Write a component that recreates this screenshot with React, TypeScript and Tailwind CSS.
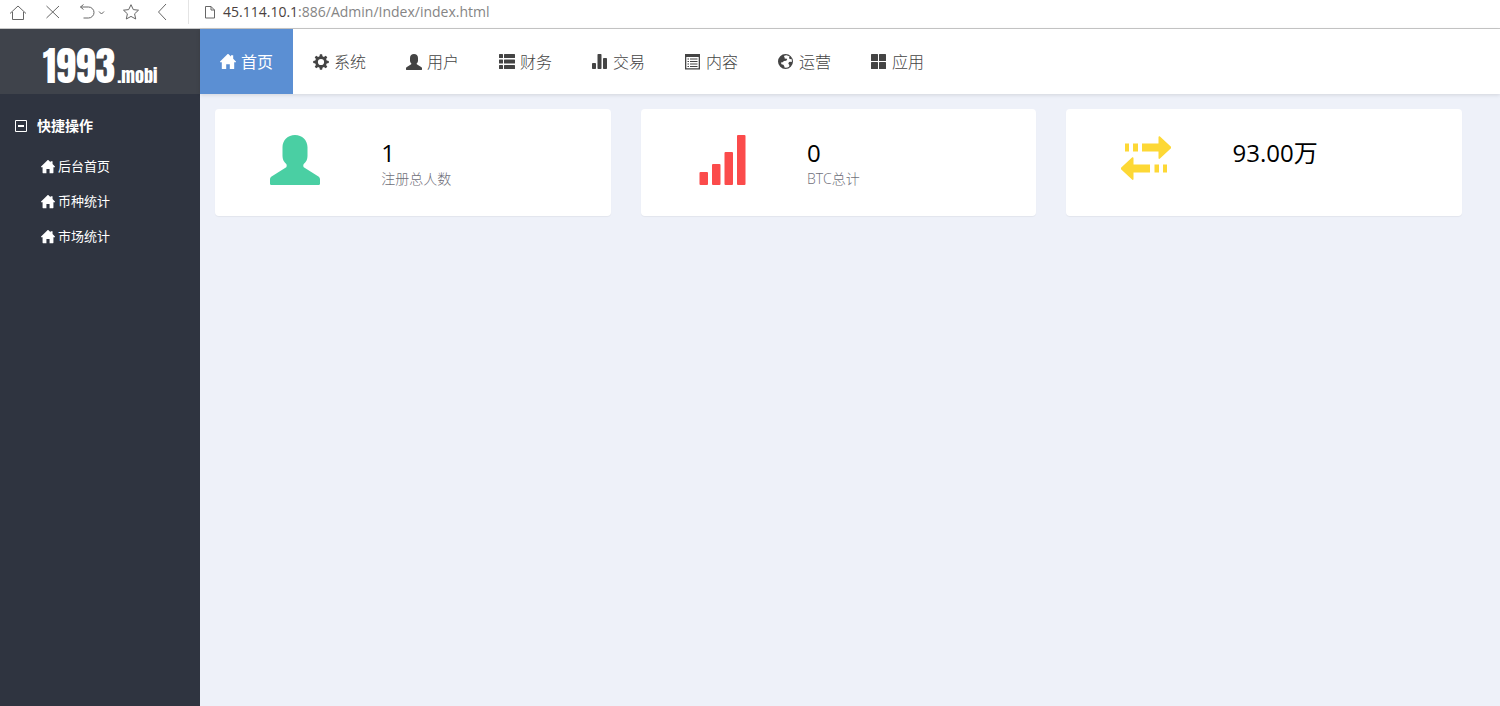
import { useState, type ReactNode } from 'react'

interface IconProps {
  className?: string
}

interface NavItem {
  label: string
  icon: (props: IconProps) => ReactNode
}

function Glyph({ className = 'size-4', children }: IconProps & { children: ReactNode }) {
  return (
    <svg className={`${className} shrink-0`} viewBox="0 0 16 16" fill="currentColor" aria-hidden="true">
      {children}
    </svg>
  )
}

function HomeIcon({ className }: IconProps) {
  return (
    <Glyph className={className}>
      <path d="M7.4.2a.8.8 0 0 1 1.200 0L11 2.500V1.300h2.200v3.400l2.700 2.700c.4.400.1.900-.3.900H14.200v6.200a.5.5 0 0 1-.5.500h-3.900v-4.800H6.200v4.800H2.300a.5.5 0 0 1-.5-.5V8.300H.4c-.4 0-.7-.5-.3-.9z" />
    </Glyph>
  )
}

function CogIcon({ className }: IconProps) {
  return (
    <Glyph className={className}>
      <path
        fillRule="evenodd"
        d="M6.900.2h2.200l.4 2.100 1.400.6 1.800-1.200 1.600 1.600-1.200 1.800.6 1.400 2.100.4v2.200l-2.100.4-.6 1.400 1.200 1.800-1.600 1.600-1.800-1.200-1.400.6-.4 2.100H6.900l-.4-2.100-1.400-.6-1.800 1.200-1.600-1.600 1.200-1.800-.6-1.400L.2 9.100V6.900l2.100-.4.6-1.400-1.200-1.800 1.600-1.600 1.800 1.200 1.400-.6zM8 4.900a3.100 3.100 0 1 0 0 6.200 3.100 3.100 0 0 0 0-6.200z"
      />
    </Glyph>
  )
}

function UserIcon({ className }: IconProps) {
  return (
    <Glyph className={className}>
      <path d="M8 0c2.300 0 4 1.700 4 3.900v2.800c0 1-.4 1.900-1.200 2.600-.2.2-.2.8 0 1l4.700 3c.3.2.5.5.5.9v1.400c0 .2-.2.400-.4.400H.4c-.2 0-.4-.2-.4-.4v-1.400c0-.4.2-.7.5-.9l4.700-3c.2-.2.2-.8 0-1C4.400 8.600 4 7.700 4 6.700V3.900C4 1.700 5.700 0 8 0z" />
    </Glyph>
  )
}

function ListIcon({ className }: IconProps) {
  return (
    <Glyph className={className}>
      <rect x="0" y="0" width="4" height="4" rx=".5" />
      <rect x="5" y="0" width="11" height="4" rx=".5" />
      <rect x="0" y="5.500" width="4" height="4" rx=".5" />
      <rect x="5" y="5.500" width="11" height="4" rx=".5" />
      <rect x="0" y="11" width="4" height="4" rx=".5" />
      <rect x="5" y="11" width="11" height="4" rx=".5" />
    </Glyph>
  )
}

function StatsIcon({ className }: IconProps) {
  return (
    <Glyph className={className}>
      <rect x="0" y="9" width="4" height="6" rx=".8" />
      <rect x="5.500" y="0" width="4" height="15" rx=".8" />
      <rect x="11" y="4" width="4" height="11" rx=".8" />
    </Glyph>
  )
}

function ArticleIcon({ className }: IconProps) {
  return (
    <Glyph className={className}>
      <path fillRule="evenodd" d="M0 0h15v15.500H0zM1.300 3v11.200h12.400V3z" />
      <path d="M2.500 4.500H4v1H2.500zM5 4.500h7.500v1H5zM2.500 7H4v1H2.500zM5 7h7.500v1H5zM2.500 9.500H4v1H2.500zM5 9.500h7.500v1H5zM2.500 12H4v1H2.500zM5 12h7.500v1H5z" />
    </Glyph>
  )
}

function GlobeIcon({ className }: IconProps) {
  return (
    <Glyph className={className}>
      <path
        fillRule="evenodd"
        d="M7.500 0a7.500 7.500 0 1 1 0 15 7.500 7.500 0 0 1 0-15zM8.200 1.300l-1.900.5-.3 1.400.9.300-.2 1.300 1.600-.4.9 1.100-1 1.300-2.200.2-1.300 1.200-1.800.2.6 1.800 1.900.6.9 1.500.2 1.300a6.200 6.200 0 0 0 4.600-.8l.3-1.700-1.100-1.300.7-1.700 1.500-.3 1.300.3a6.200 6.200 0 0 0-.4-3.300l-1.400.4-1-1.200.6-1.400A6.200 6.200 0 0 0 8.200 1.300z"
      />
    </Glyph>
  )
}

function GridIcon({ className }: IconProps) {
  return (
    <Glyph className={className}>
      <rect x="0" y="0" width="7" height="7" rx=".5" />
      <rect x="8" y="0" width="7" height="7" rx=".5" />
      <rect x="0" y="8" width="7" height="7" rx=".5" />
      <rect x="8" y="8" width="7" height="7" rx=".5" />
    </Glyph>
  )
}

function SignalIcon() {
  return (
    <svg className="size-[50px]" viewBox="0 0 50 50" fill="currentColor" aria-hidden="true">
      <rect x="3.500" y="37" width="8.500" height="13" rx="1" />
      <rect x="16" y="29" width="8.500" height="21" rx="1" />
      <rect x="28.500" y="17" width="8.500" height="33" rx="1" />
      <rect x="41" y="0" width="8.500" height="50" rx="1" />
    </svg>
  )
}

function TransferIcon() {
  return (
    <svg className="size-[50px]" viewBox="0 0 50 50" fill="currentColor" aria-hidden="true">
      <path d="M4 8.500h4v8H4zM12 8.500h5v8h-5zM21 8.500h16.500V2.200c0-1 .8-1.300 1.500-.6l11 10.100c.5.500.5 1 0 1.500L39 23.500c-.7.7-1.500.4-1.500-.6v-6.400H21z" />
      <path d="M46 29.500h-4v8h4zM38 29.500h-4.500v8H38zM29 29.500H12.500v-6.300c0-1-.8-1.300-1.500-.6L0 32.700c-.5.500-.5 1 0 1.500l11 10.300c.7.700 1.500.4 1.500-.6v-6.400H29z" />
    </svg>
  )
}

const navItems: NavItem[] = [
  { label: '首页', icon: HomeIcon },
  { label: '系统', icon: CogIcon },
  { label: '用户', icon: UserIcon },
  { label: '财务', icon: ListIcon },
  { label: '交易', icon: StatsIcon },
  { label: '内容', icon: ArticleIcon },
  { label: '运营', icon: GlobeIcon },
  { label: '应用', icon: GridIcon },
]

const quickLinks = ['后台首页', '币种统计', '市场统计']

function BrowserBar() {
  return (
    <div className="flex h-[29px] items-start border-b border-[#c8c8c8] bg-white text-[#666]">
      <div className="flex h-6 shrink-0 items-center pl-2">
        <button type="button" aria-label="主页" className="mr-4">
          <svg className="size-5" viewBox="0 0 20 20" fill="none" stroke="currentColor">
            <path d="M2 11.500 10 4l8 7.500M4.500 10v7.500h11V10" />
          </svg>
        </button>
        <button type="button" aria-label="停止" className="mr-4">
          <svg className="size-5" viewBox="0 0 20 20" fill="none" stroke="currentColor">
            <path d="m2.500 4 12.500 12M15 4 2.500 16" />
          </svg>
        </button>
        <button type="button" aria-label="撤销" className="mr-4">
          <svg className="h-5 w-[26px]" viewBox="0 0 26 20" fill="none" stroke="currentColor">
            <path d="M3.500 2.500.5 5l3 2.500M.5 5h8a5.500 5.500 0 0 1 0 11H3.500M19 9.500l2.500 2.500L24 9.500" />
          </svg>
        </button>
        <button type="button" aria-label="收藏" className="mr-4">
          <svg className="size-5" viewBox="0 0 20 20" fill="none" stroke="currentColor">
            <path d="m9 2.700 2.300 4.900 5.200.6-3.900 3.600 1.100 5.200L9 14.400 4.300 17l1.100-5.200-3.900-3.600 5.200-.6z" />
          </svg>
        </button>
        <button type="button" aria-label="后退">
          <svg className="h-5 w-3" viewBox="0 0 12 20" fill="none" stroke="currentColor">
            <path d="M8 2 .5 10 8 18" />
          </svg>
        </button>
      </div>
      <div className="ml-[18px] flex h-6 flex-1 items-center border-l border-[#e4e4e4] pl-4">
        <svg className="mr-2 h-[14px] w-[10px] shrink-0" viewBox="0 0 10 14" fill="none" stroke="currentColor">
          <path d="M.5 1.500H6l3.500 3.500v8H.5zM6 1.500V5h3.500" />
        </svg>
        <label htmlFor="address" className="text-sm text-[#4a3f40]">
          45.114.10.1
        </label>
        <input
          id="address"
          type="text"
          defaultValue=":886/Admin/Index/index.html"
          className="min-w-0 flex-1 bg-transparent text-sm text-[#858585] outline-none"
        />
      </div>
    </div>
  )
}

function Sidebar() {
  const [open, setOpen] = useState(true)

  return (
    <aside className="w-[200px] shrink-0 bg-[#2f3440] text-white">
      <a
        href="#"
        className="flex h-[65px] items-baseline justify-center gap-0.5 bg-[#3f434b] font-['Impact','Anton','Roboto_Condensed','Liberation_Sans_Narrow',sans-serif]"
      >
        <span className="text-[40px] leading-[75px]">1993</span>
        <span className="text-lg">.mobi</span>
      </a>
      <button
        type="button"
        aria-expanded={open}
        onClick={() => setOpen(!open)}
        className="mt-[22px] flex items-center gap-2.5 pl-[15px] text-sm font-bold"
      >
        <svg className="size-3 shrink-0" viewBox="0 0 12 12" fill="none" stroke="currentColor" aria-hidden="true">
          <path d="M.5.5h11v11H.5z" />
          <path d={open ? 'M3 6h6' : 'M3 6h6M6 3v6'} strokeWidth="2" />
        </svg>
        快捷操作
      </button>
      {open && (
        <ul className="mt-[13px]">
          {quickLinks.map((label) => (
            <li key={label}>
              <a href="#" className="flex h-[35px] items-center gap-[3px] pl-[41px] text-[13px]">
                <HomeIcon className="size-[14px]" />
                {label}
              </a>
            </li>
          ))}
        </ul>
      )}
    </aside>
  )
}

function TopNav() {
  return (
    <nav className="flex h-[65px] bg-white shadow-[0_1px_4px_rgba(0,0,0,0.12)]">
      {navItems.map(({ label, icon: Icon }, i) => (
        <a
          key={label}
          href="#"
          className={`flex items-center gap-[5px] px-5 text-base ${
            i === 0 ? 'bg-[#5b8fd3] text-white' : 'font-light text-[#444]'
          }`}
        >
          <Icon />
          {label}
        </a>
      ))}
    </nav>
  )
}

interface StatCardProps {
  value: string
  label?: string
  icon: ReactNode
}

function StatCard({ value, label, icon }: StatCardProps) {
  return (
    <div className="flex h-[107px] rounded bg-white pt-[26px] shadow-[0_1px_1px_rgba(0,0,0,0.05)]">
      <div className="flex w-2/5 justify-center pl-0.5">{icon}</div>
      <div className="pt-0.5 pl-2">
        <div className="text-2xl text-black">{value}</div>
        {label && <div className="text-sm font-light text-[#6f6f7a]">{label}</div>}
      </div>
    </div>
  )
}

export default function App() {
  return (
    <div className="flex min-h-screen flex-col bg-[#eef1f9] font-['Open_Sans','Noto_Sans_CJK_SC',sans-serif]">
      <BrowserBar />
      <div className="flex flex-1">
        <Sidebar />
        <div className="min-w-0 flex-1">
          <TopNav />
          <main className="grid grid-cols-3 gap-[30px] pt-[15px] pr-[38px] pl-[15px]">
            <StatCard
              value="1"
              label="注册总人数"
              icon={
                <span className="text-[#4acfa3]">
                  <UserIcon className="size-[50px]" />
                </span>
              }
            />
            <StatCard
              value="0"
              label="BTC总计"
              icon={
                <span className="text-[#fb4b4b]">
                  <SignalIcon />
                </span>
              }
            />
            <StatCard
              value="93.00万"
              icon={
                <span className="text-[#fdd835]">
                  <TransferIcon />
                </span>
              }
            />
          </main>
        </div>
      </div>
    </div>
  )
}
